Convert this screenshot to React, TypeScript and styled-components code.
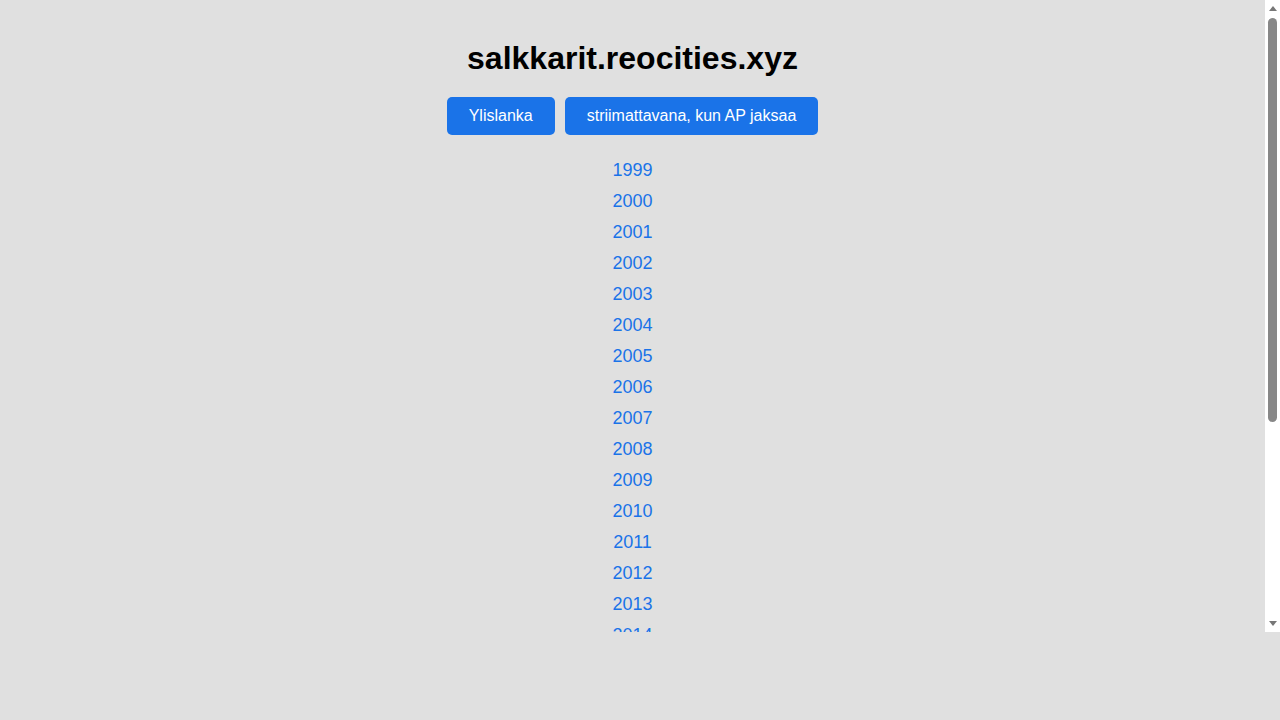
import { useEffect, useRef, useState } from 'react'
import styled, { createGlobalStyle } from 'styled-components'

const GlobalStyle = createGlobalStyle`
  html, body {
    margin: 0;
    padding: 0;
    background: #e0e0e0;
    font-family: "Liberation Sans", Arial, sans-serif;
  }
`

const Frame = styled.div`
  display: flex;
  height: 632px;
`

const Scroller = styled.div`
  flex: 1;
  overflow-y: auto;
  scrollbar-width: none;
  background: #e0e0e0;

  &::-webkit-scrollbar {
    display: none;
  }
`

const Rail = styled.div`
  width: 15px;
  display: flex;
  flex-direction: column;
  background: #fff;
`

const ArrowButton = styled.div<{ $down?: boolean }>`
  height: 15px;
  display: flex;
  justify-content: center;
  align-items: ${(p) => (p.$down ? 'flex-end' : 'flex-start')};
  padding: ${(p) => (p.$down ? '0 0 6px' : '6px 0 0')};
  box-sizing: border-box;

  &::before {
    content: '';
    width: 0;
    height: 0;
    border-left: 4.5px solid transparent;
    border-right: 4.5px solid transparent;
    ${(p) => (p.$down ? 'border-top: 5px solid #777;' : 'border-bottom: 5px solid #777;')}
  }
`

const Track = styled.div`
  flex: 1;
  padding-top: 3px;
`

const Thumb = styled.div`
  width: 9px;
  margin-left: 3px;
  background: #878787;
  border-radius: 5px;
`

const Page = styled.main`
  display: flex;
  flex-direction: column;
  align-items: center;
  padding: 40px 0 38px;
`

const Title = styled.h1`
  margin: 0 0 20px;
  font-size: 32px;
  line-height: 37px;
  font-weight: 700;
  color: #000;
`

const ButtonRow = styled.div`
  display: flex;
  gap: 10px;
  margin-bottom: 20px;
`

const Button = styled.a`
  display: inline-block;
  padding: 10px 22px;
  font-size: 16px;
  line-height: 18px;
  color: #fff;
  background: #1a73e8;
  border-radius: 5px;
  text-decoration: none;
  cursor: pointer;
`

const YearList = styled.ul`
  list-style: none;
  margin: 0;
  padding: 0;
  display: flex;
  flex-direction: column;
  align-items: center;
`

const YearLink = styled.a`
  display: block;
  font-size: 18px;
  line-height: 31px;
  color: #1a73e8;
  text-decoration: none;
`

const years = Array.from({ length: 24 }, (_, i) => 1999 + i)

export default function App() {
  const scrollRef = useRef<HTMLDivElement>(null)
  const [bar, setBar] = useState({ top: 0, height: 404 })

  const update = () => {
    const el = scrollRef.current
    if (!el) return
    const trackLen = 632 - 30 - 3
    const ratio = el.clientHeight / el.scrollHeight
    const height = Math.max(30, trackLen * ratio)
    const max = el.scrollHeight - el.clientHeight
    const top = max > 0 ? (el.scrollTop / max) * (trackLen - height) : 0
    setBar({ top, height })
  }

  useEffect(() => {
    update()
  }, [])

  return (
    <>
      <GlobalStyle />
      <Frame>
        <Scroller ref={scrollRef} onScroll={update}>
          <Page>
            <Title>salkkarit.reocities.xyz</Title>
            <ButtonRow>
              <Button href="#">Ylislanka</Button>
              <Button href="#">striimattavana, kun AP jaksaa</Button>
            </ButtonRow>
            <YearList>
              {years.map((y) => (
                <li key={y}>
                  <YearLink href="#">{y}</YearLink>
                </li>
              ))}
            </YearList>
          </Page>
        </Scroller>
        <Rail>
          <ArrowButton />
          <Track>
            <Thumb style={{ height: bar.height, transform: `translateY(${bar.top}px)` }} />
          </Track>
          <ArrowButton $down />
        </Rail>
      </Frame>
    </>
  )
}
